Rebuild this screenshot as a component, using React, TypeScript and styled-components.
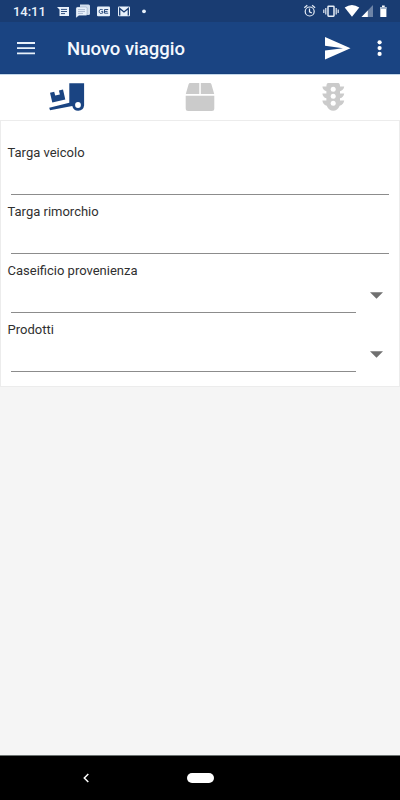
import React from "react";
import styled, { createGlobalStyle } from "styled-components";

const navy = "#1a4482";

const GlobalStyle = createGlobalStyle`
  * { box-sizing: border-box; }
  body { margin: 0; background: #f5f5f5; font-family: Roboto, sans-serif; }
  svg { display: block; flex: none; }
`;

const Screen = styled.div`
  width: 400px;
  height: 800px;
  display: flex;
  flex-direction: column;
  overflow: hidden;
  background: #f5f5f5;
`;

const StatusBar = styled.div`
  height: 22px;
  flex: none;
  display: flex;
  align-items: center;
  background: #193c72;
  color: #fff;
`;

const Clock = styled.span`
  width: 57px;
  padding: 1px 0 0 13px;
  font-size: 13px;
  font-weight: 500;
  letter-spacing: -0.05px;
  line-height: 22px;
  color: #e8f1fb;
`;

const Toolbar = styled.header`
  height: 52px;
  flex: none;
  display: flex;
  align-items: center;
  padding-left: 17px;
  background: ${navy};
  border-bottom: 1px solid #17407b;
`;

const Title = styled.h1`
  flex: 1;
  margin: 2px 0 0 32px;
  font-size: 18.5px;
  font-weight: 500;
  line-height: 24px;
  color: #f3f8fe;
`;

const Tabs = styled.nav`
  height: 46px;
  flex: none;
  display: grid;
  grid-template-columns: repeat(3, 1fr);
  justify-items: center;
  background: #fff;
  border-top: 1px solid #c3d7ea;
`;

const Tab = styled.button<{ $active?: boolean }>`
  padding: 0;
  border: 0;
  background: none;
  color: ${(p) => (p.$active ? navy : "#cbcbcb")};
`;

const Card = styled.form`
  height: 267px;
  flex: none;
  padding-top: 21px;
  background: #fff;
  border: 1px solid #ececec;
`;

const Field = styled.div`
  height: 59px;
  padding: 0 10px 0 6.5px;
`;

const Label = styled.label`
  display: block;
  height: 20px;
  font-size: 13px;
  line-height: 22px;
  letter-spacing: 0;
  color: #303030;
`;

const Control = styled.div`
  display: flex;
  align-items: center;
  height: 33px;
  padding-left: 3.5px;
`;

const Input = styled.div<{ $select?: boolean }>`
  flex: none;
  width: ${(p) => (p.$select ? "345px" : "378px")};
  height: 33px;
  border-bottom: 1px solid #8c8c8c;
`;

const Arrow = styled.svg`
  margin: -3px 0 0 13.6px;
`;

const Spacer = styled.main`
  flex: 1;
`;

const NavBar = styled.footer`
  height: 45px;
  flex: none;
  display: grid;
  grid-template-columns: 82px 1fr 82px;
  align-items: center;
  background: #000;
  border-top: 1px solid #6b7270;
`;

const HomePill = styled.div`
  justify-self: center;
  width: 27px;
  height: 10px;
  border-radius: 5px;
  background: #fff;
`;

const NotificationIcons = () => (
  <svg width="93" height="22" viewBox="57 0 93 22" fill="#e8f1fb">
    <path d="M57 7h12v9h-9.5V9.5Z" />
    <path d="M61 9.4h6M61 11.5h6M61 13.6h4" stroke="#193c72" strokeWidth=".9" />
    <path d="M80 4.5h8.5q1.5 0 1.5 1.5v7.5q0 1.5-1.5 1.5H80Z" opacity=".9" />
    <path d="M77.5 7h8.3q1.3 0 1.3 1.3v5.9q0 1.3-1.3 1.3H79l-3 2.3V8.5Q76 7 77.5 7Z" stroke="#506c96" strokeWidth=".3" />
    <path d="M78 9.6h7M78 11.5h7M78 13.4h5" stroke="#8699b8" strokeWidth=".6" />
    <rect x="97" y="6.5" width="13" height="9.7" rx="1" />
    <path d="M102.8 9.8q-3.6-1.3-3.6 1.6t3.6 1.6v-1.5h-1.5M108.2 9.5H104.500v3.700h3.700M104.500 11.400h3" fill="none" stroke="#193c72" strokeWidth=".9" />
    <rect x="118" y="6.5" width="12" height="9.7" rx="1" />
    <path d="M119.700 15.500V8.400l4.300 3.500 4.300-3.500v7.100" fill="none" stroke="#193c72" strokeWidth="1.300" />
    <circle cx="144" cy="11.300" r="1.900" />
  </svg>
);

const SystemIcons = () => (
  <svg width="97" height="22" viewBox="303 0 97 22" fill="#fff">
    <g fill="none" stroke="#e6edf6" strokeWidth="1.200">
      <circle cx="309.700" cy="11.500" r="4.500" />
      <path d="M309.500 8.500v3.300l2.300 1.300M304.300 7.800l3-2.500M315.100 7.800l-3-2.500" />
      <rect x="328" y="6.200" width="6" height="10" rx=".6" strokeWidth="1.500" />
      <path d="M325.800 8v6.500M336.200 8v6.500M323.800 9.500v3.500M338.200 9.500v3.500" strokeWidth="1.200" />
    </g>
    <path d="M344.700 7.600q7.200-5 14.600 0l-7.300 9.200Z" />
    <path d="M373 5v12h-11.500Z" fill="#6d84a7" />
    <path d="M367.800 10.500V17h-6.300Z" />
    <path d="M380.300 7h1.700V5.500h2.700V7h1.700v10h-6.100Z" />
    <path d="M380.300 7h6.100v2h-6.100Z" fill="#a9b8cd" />
  </svg>
);

const MenuIcon = () => (
  <svg width="18" height="14" viewBox="0 0 18 14" stroke="#e8f1fb" strokeWidth="1.800">
    <path d="M0 2h18M0 7.200h18M0 12.300h18" />
  </svg>
);

const ActionIcons = () => (
  <svg width="76" height="30" viewBox="324 33 76 30" fill="#fff">
    <path d="M325 37 350.500 48.200 325 59.400V50.600L343 48.200 325 45.800Z" />
    <circle cx="379.600" cy="42.300" r="2.100" />
    <circle cx="379.600" cy="48.100" r="2.100" />
    <circle cx="379.600" cy="53.900" r="2.100" />
  </svg>
);

const DeliveryIcon = () => (
  <svg width="36" height="45" viewBox="49 75 36 45" fill="currentColor">
    <path d="M69.300 83.300H84.100V105.500A6 6 0 0 1 72.300 106L50 110.300 49.200 107.700 69.300 102.800Z" />
    <path d="M50 92.700 54.200 91.700 55.200 95.500 59.900 94.400 58.900 90.600 63 89.600 65.300 99.500 52.300 102.600Z" />
    <circle cx="78" cy="105" r="2.900" fill="#fff" />
  </svg>
);

const BoxIcon = () => (
  <svg width="30" height="45" viewBox="185 75 30 45" fill="currentColor">
    <path d="M190.200 83.100H199.300V94H185.800L188.600 84.300Q189 83.100 190.200 83.100ZM200.800 83.100H209.800Q211 83.100 211.400 84.300L214.200 94H200.800ZM185.700 95.800H214.300V108.500Q214.300 111 211.800 111H188.200Q185.700 111 185.700 108.500Z" />
  </svg>
);

const TrafficIcon = () => (
  <svg width="24" height="45" viewBox="321.300 75 24 45">
    <path fill="currentColor" d="M328.500 83H338.500Q340.300 83 340.300 86.500H344.500Q344 90.200 340.300 91.200V93.400H344.500Q344 97.200 340.300 98.200V100.400H344.500Q344 104.200 340 105.700Q337.800 110.800 333.500 110.800T327 105.700Q323 104.200 322.700 100.400H326.700V98.200Q323 97.200 322.700 93.400H326.700V91.200Q323 90.200 322.700 86.500H326.700Q326.700 83 328.500 83Z" />
    <g fill="#fff">
      <circle cx="333.500" cy="89.200" r="2.500" />
      <circle cx="333.500" cy="96.200" r="2.500" />
      <circle cx="333.500" cy="103.200" r="2.500" />
    </g>
  </svg>
);

const fields = [
  { label: "Targa veicolo" },
  { label: "Targa rimorchio" },
  { label: "Caseificio provenienza", select: true },
  { label: "Prodotti", select: true },
];

export default function App() {
  return (
    <Screen>
      <GlobalStyle />
      <StatusBar>
        <Clock>14:11</Clock>
        <NotificationIcons />
        <Spacer />
        <SystemIcons />
      </StatusBar>
      <Toolbar>
        <MenuIcon />
        <Title>Nuovo viaggio</Title>
        <ActionIcons />
      </Toolbar>
      <Tabs>
        <Tab $active aria-label="Trasporto"><DeliveryIcon /></Tab>
        <Tab aria-label="Merce"><BoxIcon /></Tab>
        <Tab aria-label="Stato"><TrafficIcon /></Tab>
      </Tabs>
      <Card>
        {fields.map((f) => (
          <Field key={f.label}>
            <Label>{f.label}</Label>
            <Control>
              <Input $select={f.select} />
              {f.select && (
                <Arrow width="13" height="7" viewBox="0 0 13 7">
                  <path d="M0 .3h13L6.500 6.800Z" fill="#707070" />
                </Arrow>
              )}
            </Control>
          </Field>
        ))}
      </Card>
      <Spacer />
      <NavBar>
        <svg width="90" height="12" viewBox="0 0 90 12">
          <path d="M88.300 2 84.300 6l4 4" fill="none" stroke="#fff" strokeWidth="1.500" />
        </svg>
        <HomePill />
      </NavBar>
    </Screen>
  );
}
